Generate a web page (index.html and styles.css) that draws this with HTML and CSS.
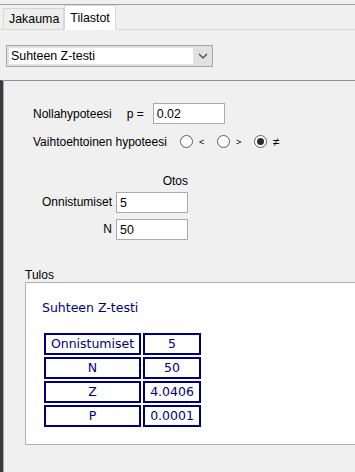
FILE: index.html
```html
<!DOCTYPE html>
<html lang="fi">
<head>
  <meta charset="UTF-8" />
  <meta name="viewport" content="width=device-width, initial-scale=1.0" />
  <title>Tilastot</title>
  <link rel="stylesheet" href="styles.css">
</head>
<body>
  <div class="topbar"></div>
  <div class="tabs">
    <div class="tab">Jakauma</div>
    <div class="tab active">Tilastot</div>
  </div>
  <div class="tab-body">
    <div class="select">
      <span class="select-text">Suhteen Z-testi</span>
      <span class="select-btn">
        <svg width="10" height="6" viewBox="0 0 10 6">
          <path d="M1 1 L5 5 L9 1" fill="none" stroke="#444" stroke-width="1.2" />
        </svg>
      </span>
    </div>

    <div class="panel">
      <div class="hyp-row">
        <span class="label">Nollahypoteesi</span>
        <span class="p-label">p =</span>
        <input class="field" type="text" value="0.02" readonly />
      </div>

      <div class="alt-row">
        <span class="label">Vaihtoehtoinen hypoteesi</span>
        <span class="radio-opt"><span class="radio"></span><span class="sym">&lt;</span></span>
        <span class="radio-opt"><span class="radio"></span><span class="sym">&gt;</span></span>
        <span class="radio-opt"><span class="radio checked"></span><span class="sym neq">&ne;</span></span>
      </div>

      <div class="sample">
        <span></span>
        <span class="col-head">Otos</span>
        <span class="row-label">Onnistumiset</span>
        <input class="field small" type="text" value="5" readonly />
        <span class="row-label">N</span>
        <input class="field small" type="text" value="50" readonly />
      </div>

      <div class="result">
        <div class="result-title">Tulos</div>
        <div class="result-box">
          <div class="result-name">Suhteen Z-testi</div>
          <table class="result-table">
            <tr><td class="name">Onnistumiset</td><td>5</td></tr>
            <tr><td class="name">N</td><td>50</td></tr>
            <tr><td class="name">Z</td><td>4.0406</td></tr>
            <tr><td class="name">P</td><td>0.0001</td></tr>
          </table>
        </div>
      </div>
    </div>
  </div>
</body>
</html>
```

FILE: styles.css
```css
body {
  margin: 0;
  padding: 0;
  background-color: #f0f0f0;
  font-family: "Liberation Sans", Arial, sans-serif;
  font-size: 12px;
  color: #000;
  overflow: hidden;
  height: 472px;
}

.topbar {
  height: 4px;
  border-bottom: 1px solid #a0a0a0;
}

.tabs {
  display: flex;
  align-items: flex-end;
  height: 24px;
  padding-left: 3px;
  border-bottom: 1px solid #d9d9d9;
}

.tab {
  height: 20px;
  line-height: 20px;
  padding: 0 4px 0 5px;
  border: 1px solid #d6d6d6;
  border-bottom: none;
  background-color: #eeeeee;
  font-size: 12.4px;
}

.tab.active {
  height: 24px;
  line-height: 24px;
  margin-bottom: -1px;
  padding: 0 5px 0 5px;
  background-color: #fff;
  border-color: #d9d9d9;
}

.tab-body {
  padding-top: 15px;
}

/* combo box */
.select {
  display: flex;
  width: 205px;
  height: 20px;
  margin-left: 6px;
  border: 1px solid #a6a6a6;
  background-color: #e1e1e1;
  font-size: 12.4px;
}

.select-text {
  flex: 1;
  background-color: #fff;
  margin: 2px 0 2px 2px;
  padding-left: 2px;
  line-height: 16px;
}

.select-btn {
  width: 19px;
  display: flex;
  align-items: center;
  justify-content: center;
}

/* main panel */
.panel {
  margin-top: 13px;
  border-top: 1px solid #8c929b;
  border-left: 3px solid #3a3a3a;
  box-shadow: inset 1px 0 0 #a4aab4;
  padding: 22px 0 0 30px;
  height: 370px;
}

.hyp-row,
.alt-row {
  display: flex;
  align-items: center;
}

.hyp-row {
  height: 21px;
}

.p-label {
  margin-left: 15px;
  margin-right: 9px;
}

.field {
  box-sizing: border-box;
  width: 72px;
  height: 21px;
  margin: 0;
  padding: 0 3px;
  border: 1px solid #ababab;
  background-color: #fff;
  font-family: "Liberation Sans", Arial, sans-serif;
  font-size: 12.4px;
  color: #000;
  outline: none;
}

.alt-row {
  margin-top: 7px;
  height: 21px;
}

.alt-row .label {
  margin-right: 13px;
}

.radio-opt {
  display: flex;
  align-items: center;
  margin-right: 12px;
}

.radio {
  box-sizing: border-box;
  width: 13px;
  height: 13px;
  border: 1px solid #5f5f5f;
  border-radius: 50%;
  background-color: #fff;
  position: relative;
}

.radio.checked::after {
  content: "";
  position: absolute;
  left: 2px;
  top: 2px;
  width: 7px;
  height: 7px;
  border-radius: 50%;
  background-color: #2b2b2b;
}

.sym {
  margin-left: 6px;
  font-size: 9px;
  width: 6px;
}

.sym.neq {
  font-size: 12px;
}

/* sample inputs */
.sample {
  display: grid;
  grid-template-columns: 74px 72px;
  column-gap: 4px;
  margin-top: 22px;
  margin-left: 5px;
}

.col-head {
  text-align: right;
  line-height: 14px;
  margin-bottom: 4px;
}

.row-label {
  text-align: right;
  line-height: 21px;
  margin-bottom: 6px;
}

/* result */
.result {
  margin-top: 22px;
  margin-left: -8px;
}

.result-title {
  line-height: 14px;
}

.result-box {
  margin-right: -10px;
  border: 1px solid #b1b1b1;
  background-color: #fff;
  padding: 17px 0 15px 16px;
  font-family: "DejaVu Sans", Verdana, sans-serif;
  font-size: 12.5px;
  color: #00007f;
}

.result-name {
  line-height: 16px;
  margin-bottom: 15px;
}

.result-table {
  border-spacing: 2px;
}

.result-table td {
  box-sizing: border-box;
  height: 22px;
  width: 58px;
  padding: 0;
  border: 2px solid #00007f;
  text-align: center;
  line-height: 18px;
}

.result-table td.name {
  width: 97px;
}
```
